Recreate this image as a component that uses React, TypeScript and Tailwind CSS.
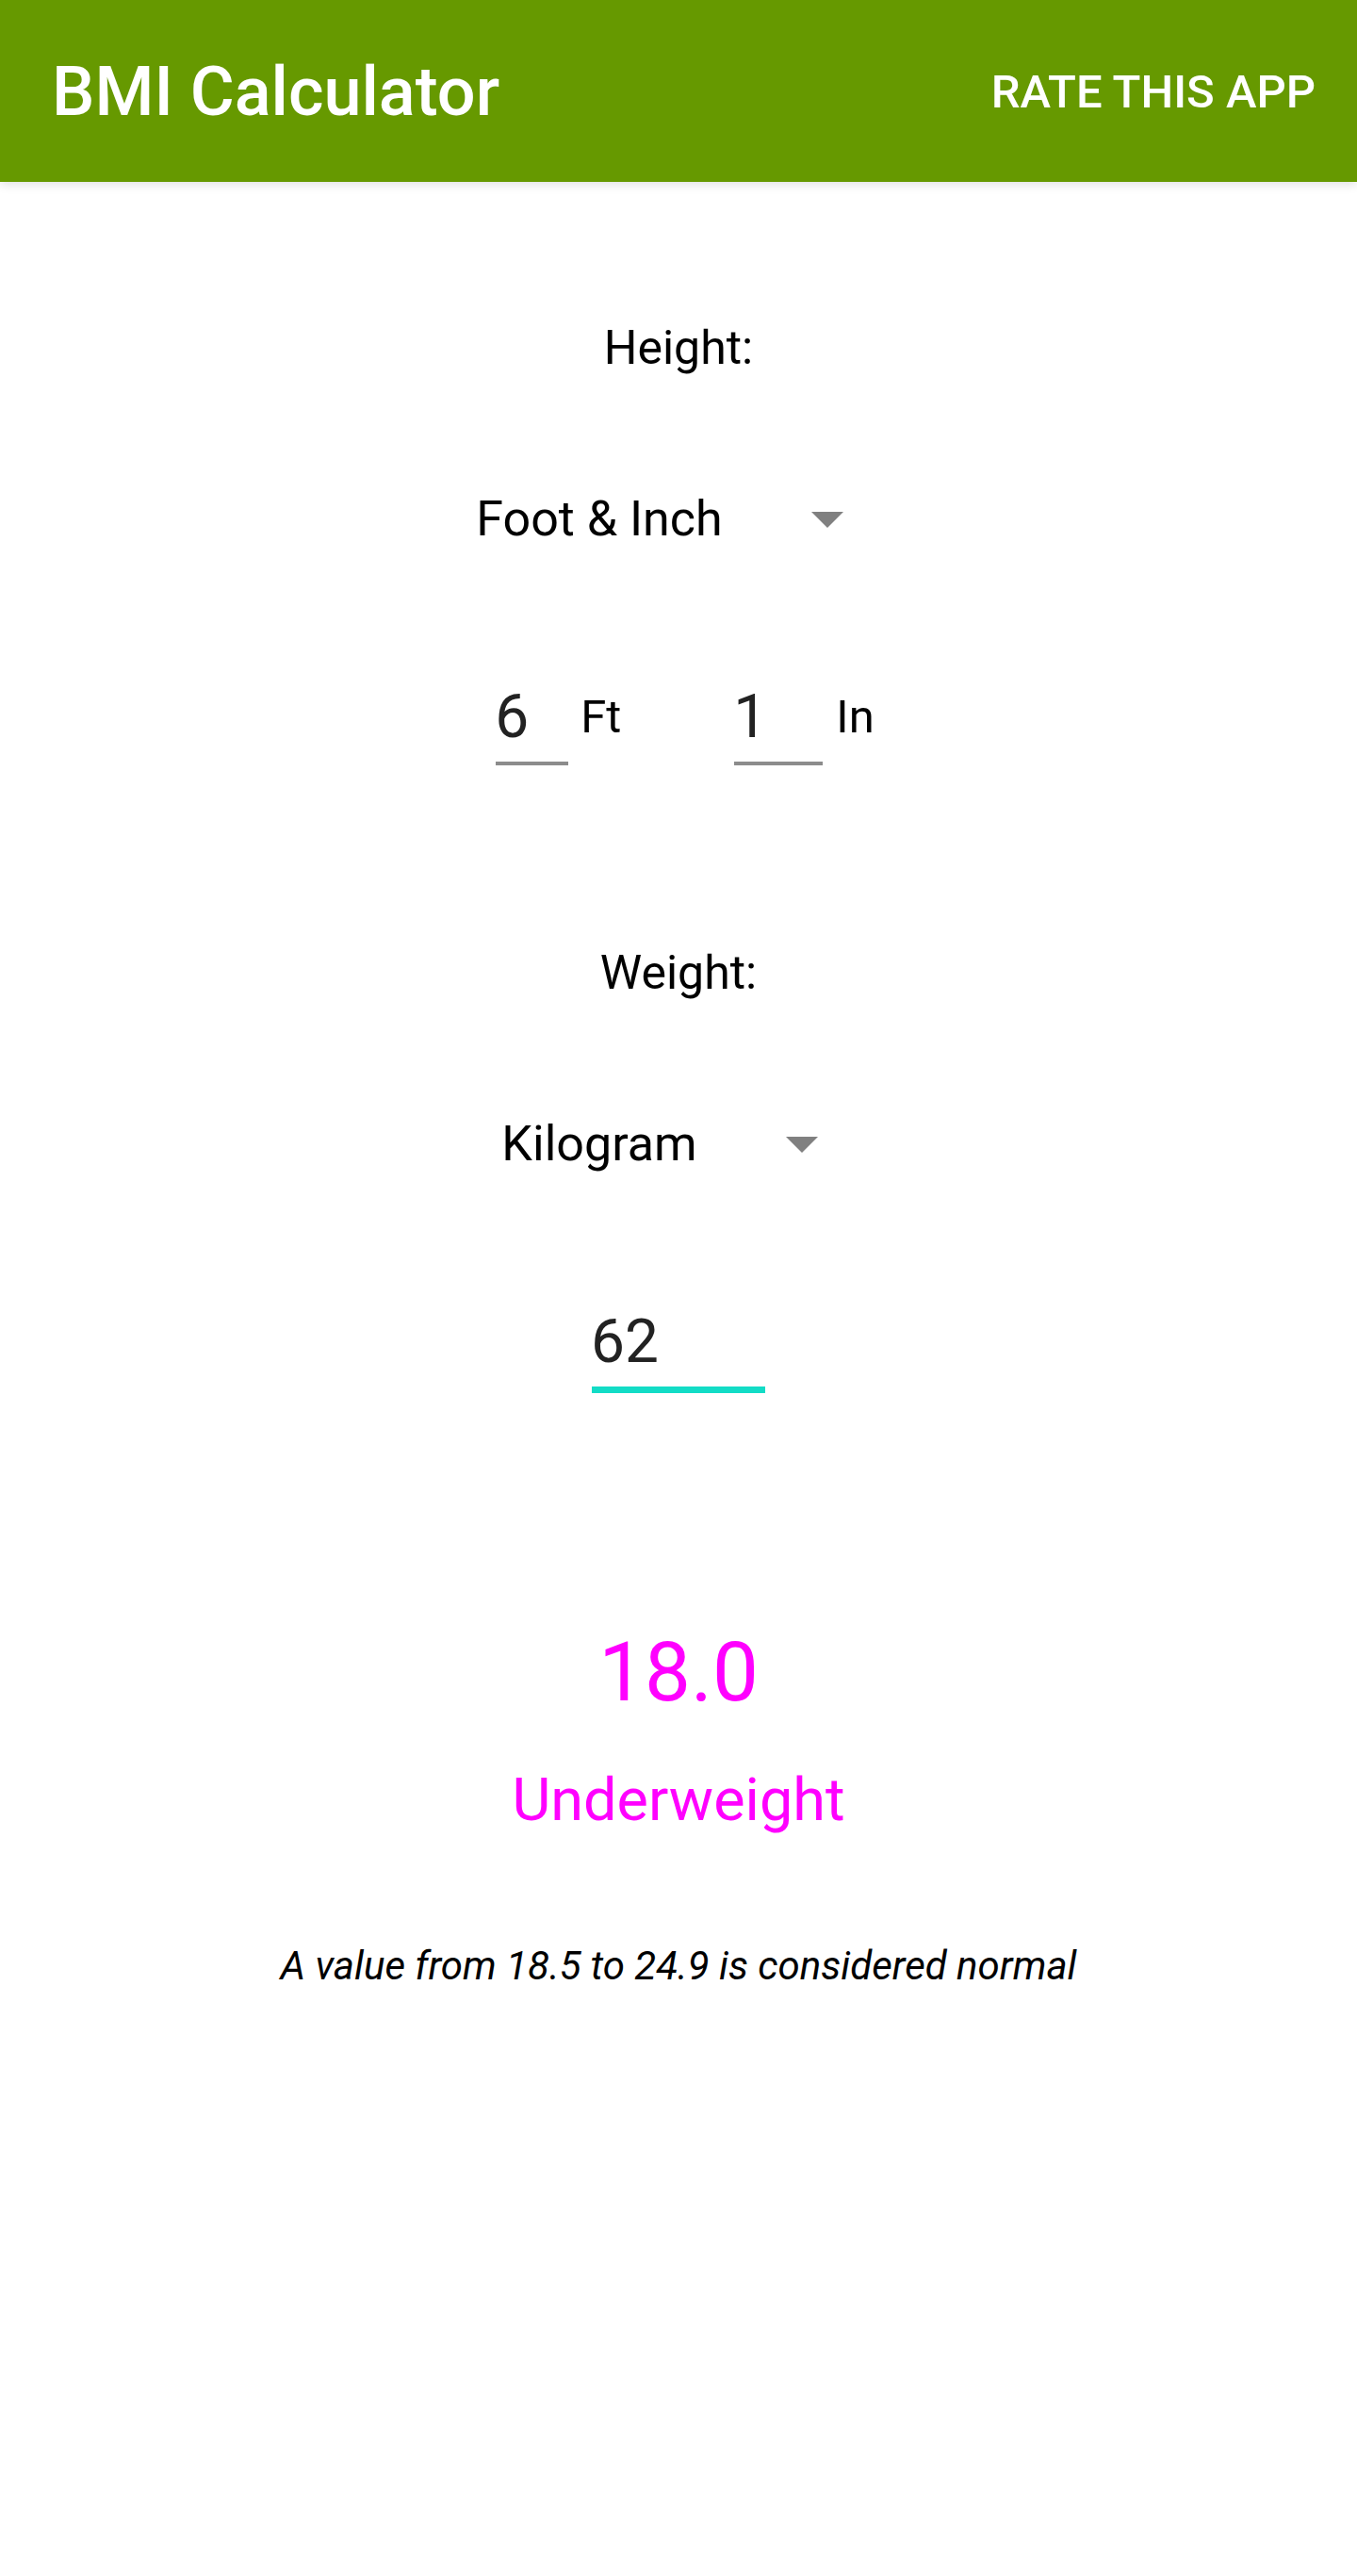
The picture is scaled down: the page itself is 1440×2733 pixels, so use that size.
import React from 'react';

// 스피너 오른쪽의 회색 삼각형
function SpinnerArrow() {
  return (
    <svg width="34" height="17" viewBox="0 0 34 17" className="shrink-0">
      <polygon points="0,0 34,0 17,17" fill="#808080" />
    </svg>
  );
}

function UnitSpinner({ label }: { label: string }) {
  return (
    <div className="flex items-center gap-[94px] pr-[40px] h-[60px]">
      <span className="text-[52px] leading-[60px] text-black">{label}</span>
      <SpinnerArrow />
    </div>
  );
}

interface NumberFieldProps {
  value: string;
  width: number;
  focused?: boolean;
}

function NumberField({ value, width, focused = false }: NumberFieldProps) {
  return (
    <div className="flex flex-col" style={{ width }}>
      <span className="h-[76px] leading-[76px] text-[64px] text-[#222222] -ml-[1px]">{value}</span>
      {focused ? (
        <div className="mt-[9px] h-[7px] w-full bg-[#12dcc6]" />
      ) : (
        <div className="mt-[9px] h-[4px] w-full bg-[#8c8c8c]" />
      )}
    </div>
  );
}

export default function App() {
  return (
    <div className="min-h-[2733px] bg-white font-['Roboto',sans-serif]">
      {/* 상단 툴바 */}
      <header className="relative z-10 flex h-[193px] items-center justify-between bg-[#669900] pl-[55px] pr-[44px] shadow-[0_3px_10px_rgba(0,0,0,0.12)]">
        <h1 className="mt-[2px] text-[72px] font-medium leading-none text-white">BMI Calculator</h1>
        <span className="mt-[2px] text-[49px] font-medium leading-none text-white">RATE THIS APP</span>
      </header>

      <main className="flex flex-col items-center">
        {/* 키 입력 */}
        <div className="mt-[146px] h-[60px] text-[50px] leading-[60px] text-black">Height:</div>

        <div className="mt-[122px]">
          <UnitSpinner label="Foot & Inch" />
        </div>

        <div className="mt-[142px] ml-[14px] flex items-start">
          <NumberField value="6" width={77} />
          <span className="ml-[13px] h-[76px] text-[49px] leading-[76px] text-black">Ft</span>
          <div className="ml-[120px]">
            <NumberField value="1" width={94} />
          </div>
          <span className="ml-[14px] h-[76px] text-[49px] leading-[76px] text-black">In</span>
        </div>

        {/* 몸무게 입력 */}
        <div className="mt-[190px] h-[60px] text-[50px] leading-[60px] text-black">Weight:</div>

        <div className="mt-[122px]">
          <UnitSpinner label="Kilogram" />
        </div>

        <div className="mt-[142px]">
          <NumberField value="62" width={184} focused />
        </div>

        {/* 결과 */}
        <div className="mt-[246px] h-[100px] text-[87px] leading-[100px] text-[#ff00ff]">18.0</div>
        <div className="mt-[51px] h-[70px] text-[63px] leading-[70px] text-[#ff00ff]">Underweight</div>

        <p className="mt-[116px] h-[50px] text-[42px] italic leading-[50px] text-black">
          A value from 18.5 to 24.9 is considered normal
        </p>
      </main>
    </div>
  );
}
